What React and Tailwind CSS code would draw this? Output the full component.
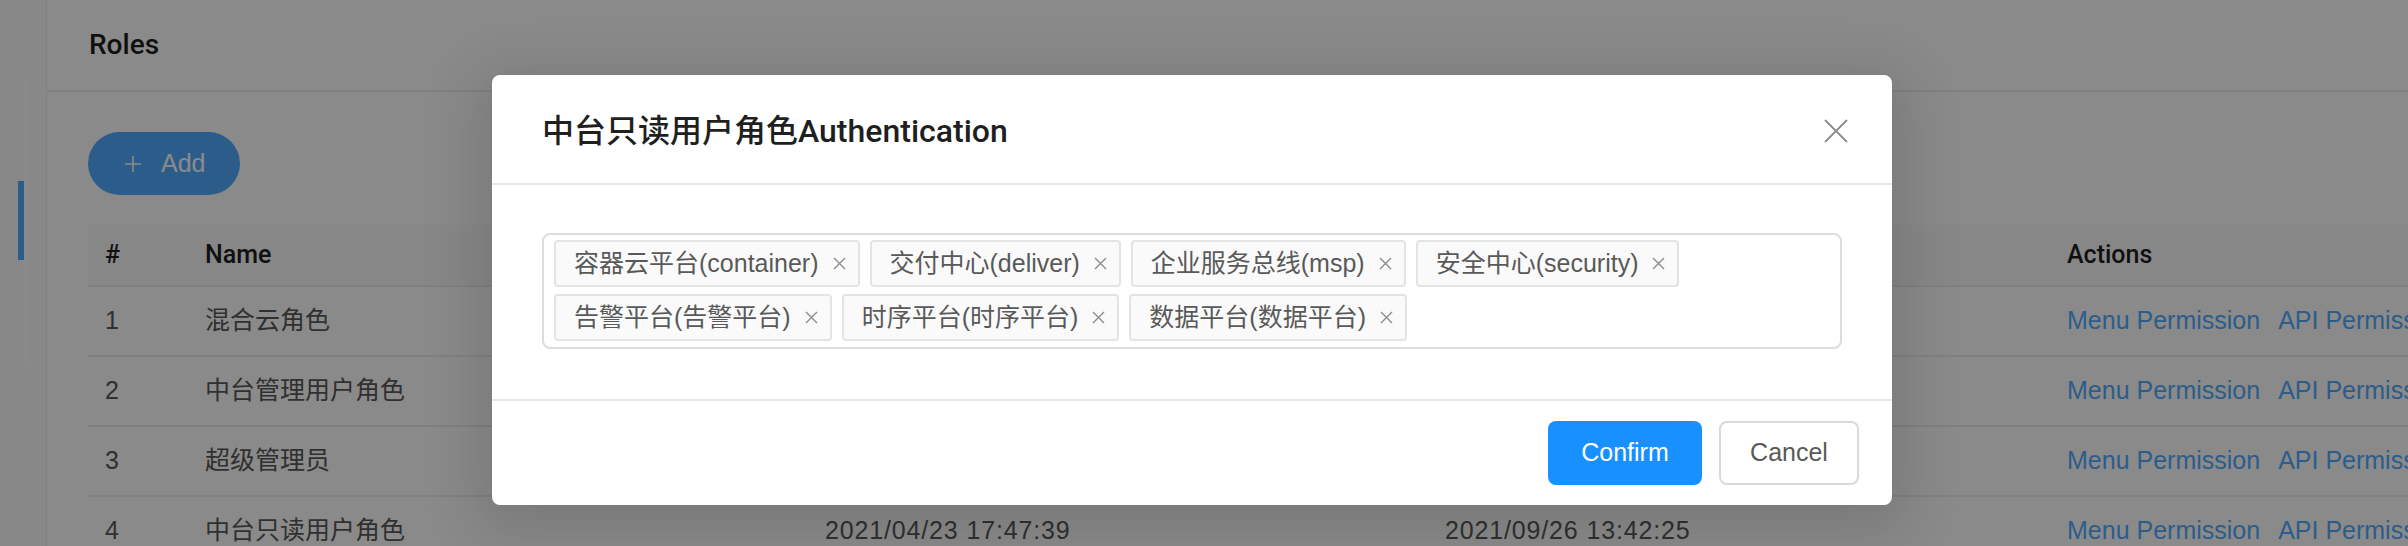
import React from "react";

const rows = [
  { id: 1, name: "混合云角色", c: "", u: "" },
  { id: 2, name: "中台管理用户角色", c: "", u: "" },
  { id: 3, name: "超级管理员", c: "", u: "" },
  { id: 4, name: "中台只读用户角色", c: "2021/04/23 17:47:39", u: "2021/09/26 13:42:25" },
];

const tagsRow1 = ["容器云平台(container)", "交付中心(deliver)", "企业服务总线(msp)", "安全中心(security)"];
const tagsRow2 = ["告警平台(告警平台)", "时序平台(时序平台)", "数据平台(数据平台)"];

function TagX() {
  return (
    <svg width="13" height="13" viewBox="0 0 13 13" className="shrink-0">
      <path d="M1 1L12 12M12 1L1 12" stroke="#8c8c8c" strokeWidth="1.4" fill="none" />
    </svg>
  );
}

function Tag({ label }) {
  return (
    <div className="h-[47px] flex items-center gap-[14px] pl-[18px] pr-[12px] bg-[#fafafa] border-2 border-[#e4e4e4] rounded-[4px] text-[25px] text-[#595959] whitespace-nowrap">
      <span>{label}</span>
      <TagX />
    </div>
  );
}

const headFont = "font-['Roboto','Noto_Sans_CJK_SC',sans-serif] font-medium";

export default function App() {
  return (
    <div className="relative w-[2408px] h-[546px] overflow-hidden bg-white font-['Liberation_Sans','Noto_Sans_CJK_SC',sans-serif]">
      <div className="flex h-full">
        <aside className="w-[47px] shrink-0 bg-[#fbfbfb] border-r border-[#ececec] pt-[78px]">
          <div className="w-[27px] h-[288px] border-r-2 border-white flex flex-col">
            <div className="mt-[103px] ml-[18px] w-[6px] h-[79px] bg-[#52adff]" />
          </div>
        </aside>
        <main className="flex-1 flex flex-col min-w-0">
          <div className="h-[92px] shrink-0 border-b-2 border-[#efefef] flex items-center pl-[42px] text-[28px] font-['Roboto',sans-serif] font-medium text-[#1f1f1f]">
            Roles
          </div>
          <div className="pl-[41px] pt-[40px]">
            <button className="h-[63px] w-[152px] rounded-full bg-[#52adff] text-white text-[25px] flex items-center pl-[37px] gap-[20px]">
              <svg width="16" height="16" viewBox="0 0 16 16">
                <path d="M8 0V16M0 8H16" stroke="white" strokeWidth="1.6" fill="none" />
              </svg>
              <span>Add</span>
            </button>
            <div className="mt-[30px] w-[2400px] text-[25px]">
              <div className={`grid grid-cols-[100px_620px_620px_622px_438px] h-[62px] items-center bg-[#fafafa] border-b-2 border-[#ededed] text-[#1f1f1f] ${headFont}`}>
                <div className="pl-[17px]">#</div>
                <div className="pl-[17px]">Name</div>
                <div className="pl-[17px]" />
                <div className="pl-[17px]" />
                <div className="pl-[17px]">Actions</div>
              </div>
              {rows.map((r) => (
                <div key={r.id} className="grid grid-cols-[100px_620px_620px_622px_438px] h-[70px] items-center border-b-2 border-[#ededed] text-[#595959]">
                  <div className="pl-[17px]">{r.id}</div>
                  <div className="pl-[17px]">{r.name}</div>
                  <div className="pl-[17px] tracking-[0.85px]">{r.c}</div>
                  <div className="pl-[17px] tracking-[0.85px]">{r.u}</div>
                  <div className="pl-[17px] flex gap-[18px] whitespace-nowrap text-[#52adff]">
                    <span>Menu Permission</span>
                    <span>API Permission</span>
                  </div>
                </div>
              ))}
            </div>
          </div>
        </main>
      </div>

      <div className="absolute inset-0 bg-black/[0.46] flex items-start pl-[492px] pt-[75px]">
        <div className="w-[1400px] h-[430px] bg-white rounded-[8px] flex flex-col shadow-[0_12px_56px_16px_rgba(0,0,0,0.12)]">
          <div className="h-[110px] shrink-0 flex items-center justify-between pl-[50px] pr-[44px] pt-[4px] border-b-2 border-[#e8e8e8]">
            <span className={`text-[32px] text-[#1f1f1f] ${headFont}`}>中台只读用户角色Authentication</span>
            <svg width="24" height="24" viewBox="0 0 24 24">
              <path d="M1 1L23 23M23 1L1 23" stroke="#8c8c8c" strokeWidth="1.8" fill="none" />
            </svg>
          </div>
          <div className="h-[214px] shrink-0 px-[50px] pt-[48px]">
            <div className="h-[116px] border-2 border-[#dcdcdc] rounded-[8px] pl-[10px] pt-[5px] flex flex-col gap-[7px]">
              <div className="flex gap-[10px]">
                {tagsRow1.map((t) => (
                  <Tag key={t} label={t} />
                ))}
              </div>
              <div className="flex gap-[10px]">
                {tagsRow2.map((t) => (
                  <Tag key={t} label={t} />
                ))}
              </div>
            </div>
          </div>
          <div className="flex-1 border-t-2 border-[#e8e8e8] flex items-center justify-end gap-[17px] pr-[33px]">
            <button className="w-[154px] h-[64px] rounded-[8px] bg-[#1890ff] text-white text-[25px] flex items-center justify-center">
              Confirm
            </button>
            <button className="w-[140px] h-[64px] rounded-[8px] bg-white border-2 border-[#d9d9d9] text-[#595959] text-[25px] flex items-center justify-center">
              Cancel
            </button>
          </div>
        </div>
      </div>
    </div>
  );
}
